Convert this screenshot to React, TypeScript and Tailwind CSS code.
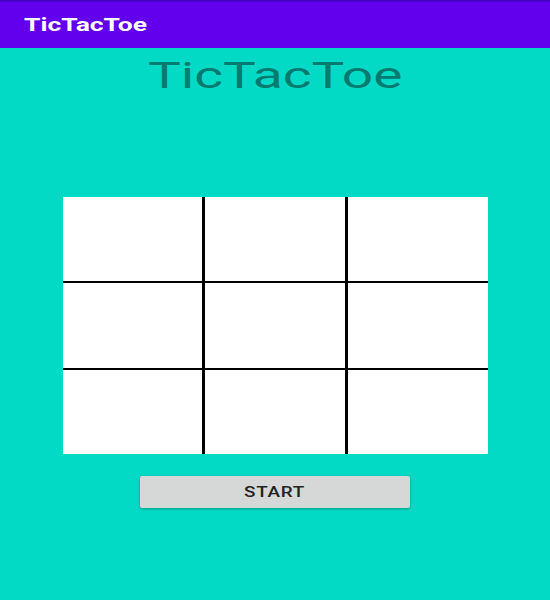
export default function App() {
  const cells = Array.from({ length: 9 });
  return (
    <div className="flex flex-col h-[600px] w-full bg-[#03dac5] font-['Roboto',sans-serif]">
      <header className="h-12 shrink-0 bg-[#6200ee] border-t-2 border-[#4a00c8] flex items-center px-6">
        <h1 className="inline-block origin-left scale-x-[1.47] text-white text-lg font-bold leading-none">
          TicTacToe
        </h1>
      </header>
      <main className="flex flex-col items-center">
        <h2 className="mt-[6px] inline-block scale-x-[1.53] text-[36px] leading-[44px] text-[#047b70]">
          TicTacToe
        </h2>
        <div className="mt-[99px] w-[425px] h-[257px] grid grid-cols-3 grid-rows-3 gap-x-[3px] gap-y-[2px] bg-black">
          {cells.map((_, idx) => (
            <div key={idx} className="bg-white" />
          ))}
        </div>
        <button className="mt-[22px] w-[270px] h-8 rounded-[2px] bg-[#d6d7d7] shadow-[0_1px_3px_rgba(0,0,0,0.3)] text-[14px] font-medium text-[#222]">
          <span className="inline-block scale-x-[1.35] tracking-[0.5px]">START</span>
        </button>
      </main>
    </div>
  );
}
